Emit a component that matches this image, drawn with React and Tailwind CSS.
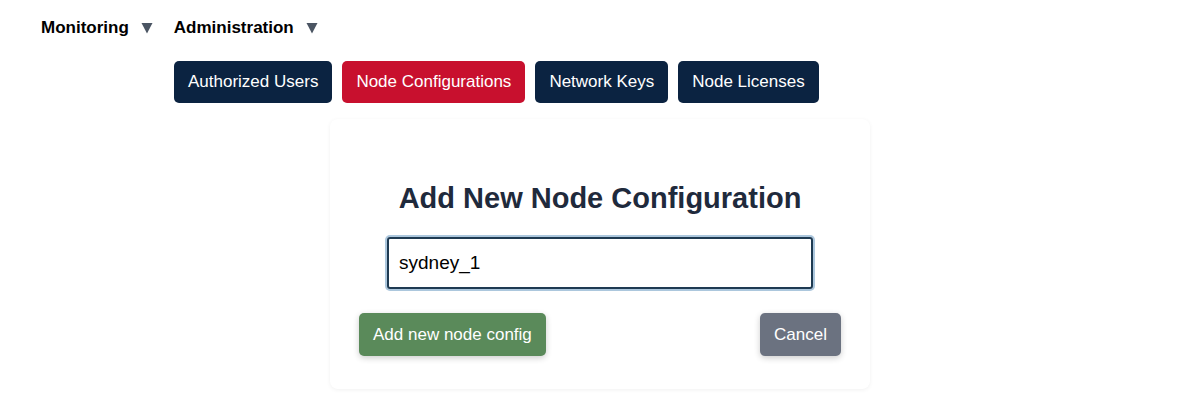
import React from "react";

const font = { fontFamily: '"Liberation Sans", Arial, sans-serif' };

function NavItem({ label }) {
  return (
    <div className="flex items-center gap-[12px]">
      <span className="text-[17px] font-bold text-black">{label}</span>
      <svg width="12" height="12" viewBox="0 0 12 12" className="mt-[1px]">
        <path d="M0.5 1 L11.5 1 L6 11.5 Z" fill="#4b5563" />
      </svg>
    </div>
  );
}

export default function App() {
  return (
    <div className="w-[1200px] h-[404px] bg-white relative" style={font}>
      <div className="flex items-center gap-[21px] pl-[41px] pt-[17px] h-[38px]">
        <NavItem label="Monitoring" />
        <NavItem label="Administration" />
      </div>
      <div className="flex gap-[10px] ml-[174px] mt-[23px]">
        <button className="h-[42px] px-[14px] rounded-[5px] bg-[#0b2341] text-white text-[17px]">Authorized Users</button>
        <button className="h-[42px] px-[14px] rounded-[5px] bg-[#c8102e] text-white text-[17px]">Node Configurations</button>
        <button className="h-[42px] px-[14px] rounded-[5px] bg-[#0b2341] text-white text-[17px]">Network Keys</button>
        <button className="h-[42px] px-[14px] rounded-[5px] bg-[#0b2341] text-white text-[17px]">Node Licenses</button>
      </div>
      <div className="mx-auto mt-[16px] w-[540px] h-[270px] rounded-[8px] bg-white shadow-[0_1px_4px_rgba(0,0,0,0.06)] flex flex-col items-center">
        <h2 className="mt-[62px] text-[29px] font-bold text-[#1f2a3c] leading-[34px]">Add New Node Configuration</h2>
        <div className="mt-[22px] w-[426px] h-[52px] rounded-[3px] border-2 border-[#1e3a52] shadow-[0_0_0_2px_rgba(70,130,180,0.45)] flex items-center px-[10px]">
          <span className="text-[19px] text-black">sydney_1</span>
        </div>
        <div className="mt-[24px] w-[482px] flex justify-between">
          <button className="h-[43px] px-[14px] rounded-[5px] bg-[#5a8a5a] text-white text-[17px] shadow-[0_2px_6px_rgba(0,0,0,0.2)]">Add new node config</button>
          <button className="h-[43px] px-[14px] rounded-[5px] bg-[#6b7280] text-white text-[17px] shadow-[0_2px_6px_rgba(0,0,0,0.2)]">Cancel</button>
        </div>
      </div>
    </div>
  );
}
